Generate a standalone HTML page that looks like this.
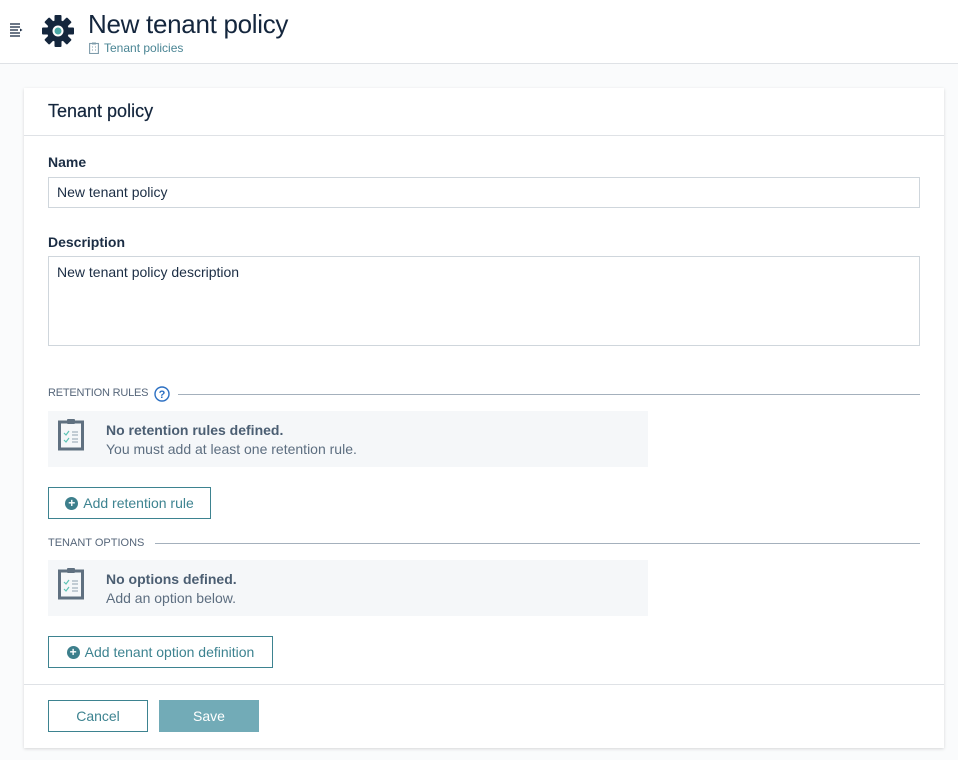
<!DOCTYPE html>
<html><head><style>
*{box-sizing:border-box;margin:0;padding:0}
body{width:958px;height:760px;background:#fafbfc;font-family:"Liberation Sans",sans-serif;color:#14263d;position:relative;overflow:hidden}
.hdr{position:absolute;left:0;top:0;width:958px;height:64px;background:#fff;border-bottom:1px solid #dfe2e6}
.card{position:absolute;left:24px;top:88px;width:920px;height:660px;background:#fff;box-shadow:0 1px 3px rgba(0,0,0,.15)}
.abs{position:absolute}
.lbl{font-size:14px;font-weight:bold;color:#1b2d44}
.inp{position:absolute;left:24px;width:872px;border:1px solid #cfd6dc;background:#fff;font-size:14px;padding:0 8px;color:#1b2d44}
.sec{position:absolute;left:24px;font-size:11px;color:#56667a;letter-spacing:0}
.line{position:absolute;height:1px;background:#a4b0bc}
.empty{position:absolute;left:24px;width:600px;height:56px;background:#f5f7f9}
.empty b{position:absolute;left:58px;top:11px;font-size:14px;color:#4b5e72}
.empty span{position:absolute;left:58px;top:30px;font-size:14px;color:#5d6e80}
.btn{position:absolute;border:1px solid #3d8390;color:#3d8390;font-size:14px;background:#fff;display:flex;align-items:center;justify-content:center}
.plus{display:inline-block;width:13px;height:13px;border-radius:50%;background:#3d7f8c;color:#fff;font-size:12px;line-height:13px;text-align:center;font-weight:bold;margin-right:5px}
</style></head><body>
<div class="hdr">
<svg class="abs" style="left:10px;top:23px" width="13" height="14" viewBox="0 0 13 14"><g stroke="#1b2d44" stroke-width="1.3"><line x1="0" y1="1" x2="10" y2="1"/><line x1="0" y1="4" x2="10" y2="4"/><line x1="0" y1="7" x2="8" y2="7"/><line x1="0" y1="10" x2="10" y2="10"/><line x1="0" y1="13" x2="10" y2="13"/></g><path d="M10 5.5 L12.5 7 L10 8.5Z" fill="#1b2d44"/></svg>
<svg class="abs" style="left:42px;top:15px" width="32" height="32" viewBox="0 0 32 32"><g fill="#14263d" transform="translate(16 16)"><circle r="11"/><g id="t"><rect x="-3.5" y="-16" width="7" height="7" rx="1"/></g><use href="#t" transform="rotate(45)"/><use href="#t" transform="rotate(90)"/><use href="#t" transform="rotate(135)"/><use href="#t" transform="rotate(180)"/><use href="#t" transform="rotate(225)"/><use href="#t" transform="rotate(270)"/><use href="#t" transform="rotate(315)"/></g><circle cx="16" cy="16" r="5.5" fill="#fff"/><circle cx="16" cy="16" r="3.5" fill="#4aa8a6"/></svg>
<div class="abs" style="left:88px;top:9px;font-size:26px;color:#14263d;letter-spacing:-0.3px">New tenant policy</div>
<svg class="abs" style="left:89px;top:42px" width="10" height="12" viewBox="0 0 10 12"><rect x=".6" y="1.5" width="8.8" height="10" fill="none" stroke="#7f9cab" stroke-width="1.1"/><rect x="3" y=".5" width="4" height="2" fill="#7f9cab"/><path d="M3 5h1M6 5h1M3 8h1M6 8h1" stroke="#7f9cab"/></svg>
<div class="abs" style="left:104px;top:41px;font-size:12px;color:#4a8594">Tenant policies</div>
</div>
<div class="card">
<div class="abs" style="left:24px;top:13px;font-size:18px;color:#14263d;font-weight:500;-webkit-text-stroke:0.2px #14263d">Tenant policy</div>
<div class="abs" style="left:0;top:47px;width:920px;height:1px;background:#dfe2e6"></div>
<div class="abs lbl" style="left:24px;top:66px">Name</div>
<div class="inp" style="top:89px;height:31px;line-height:29px">New tenant policy</div>
<div class="abs lbl" style="left:24px;top:146px">Description</div>
<div class="inp" style="top:168px;height:90px;padding-top:7px">New tenant policy description</div>
<div class="sec" style="top:299px;letter-spacing:-0.2px">RETENTION RULES</div>
<svg class="abs" style="left:130px;top:298px" width="16" height="16" viewBox="0 0 16 16"><circle cx="8" cy="8" r="7" fill="none" stroke="#2b6fc2" stroke-width="1.4"/><text x="8" y="12" font-size="11" text-anchor="middle" fill="#2b6fc2" font-family="Liberation Sans" font-weight="bold">?</text></svg>
<div class="line" style="left:154px;top:306px;width:742px"></div>
<div class="empty" style="top:323px">
<svg class="abs" style="left:10px;top:8px" width="26" height="32" viewBox="0 0 26 32"><rect x="1.5" y="3" width="23" height="27" fill="none" stroke="#5f7080" stroke-width="3"/><rect x="9" y="0" width="8" height="5" rx="1" fill="#5f7080"/><path d="M6 14l2 2 3-4M6 21l2 2 3-4" stroke="#5cc3b5" fill="none" stroke-width="1.2"/><path d="M14 13h6M14 16h6M14 20h6M14 23h6" stroke="#8fa0ae" stroke-width="1"/></svg>
<b>No retention rules defined.</b><span>You must add at least one retention rule.</span></div>
<div class="btn" style="left:24px;top:399px;width:163px;height:32px"><span class="plus">+</span>Add retention rule</div>
<div class="sec" style="top:449px">TENANT OPTIONS</div>
<div class="line" style="left:131px;top:455px;width:765px"></div>
<div class="empty" style="top:472px">
<svg class="abs" style="left:10px;top:8px" width="26" height="32" viewBox="0 0 26 32"><rect x="1.5" y="3" width="23" height="27" fill="none" stroke="#5f7080" stroke-width="3"/><rect x="9" y="0" width="8" height="5" rx="1" fill="#5f7080"/><path d="M6 14l2 2 3-4M6 21l2 2 3-4" stroke="#5cc3b5" fill="none" stroke-width="1.2"/><path d="M14 13h6M14 16h6M14 20h6M14 23h6" stroke="#8fa0ae" stroke-width="1"/></svg>
<b>No options defined.</b><span>Add an option below.</span></div>
<div class="btn" style="left:24px;top:548px;width:225px;height:32px"><span class="plus">+</span>Add tenant option definition</div>
<div class="abs" style="left:0;top:596px;width:920px;height:1px;background:#dfe2e6"></div>
<div class="btn" style="left:24px;top:612px;width:100px;height:32px">Cancel</div>
<div class="btn" style="left:135px;top:612px;width:100px;height:32px;background:#72abb7;border-color:#72abb7;color:#fff">Save</div>
</div>
</body></html>
